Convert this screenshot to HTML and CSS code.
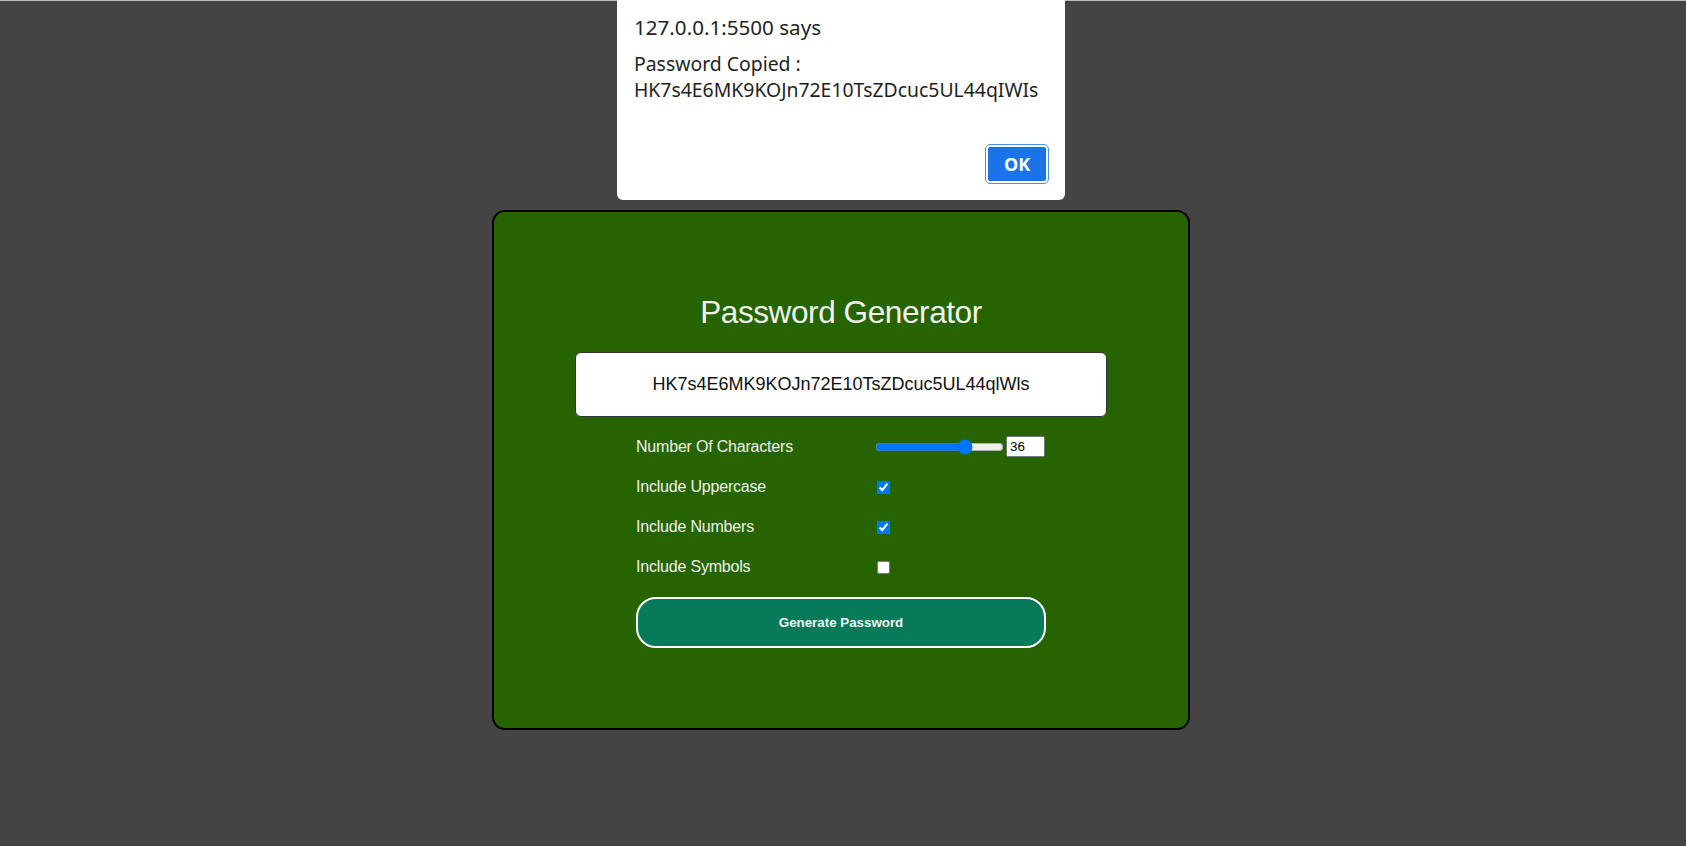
FILE: index.html
```html
<!DOCTYPE html>
<html lang="en">
<head>
<meta charset="utf-8">
<title>Password Generator</title>
<link rel="stylesheet" href="styles.css">
</head>
<body>
  <div class="topline"></div>
  <main class="stage">
    <section class="card">
      <h1 class="title">Password Generator</h1>
      <div class="output">HK7s4E6MK9KOJn72E10TsZDcuc5UL44qlWls</div>
      <div class="options">
        <label class="opt-label row-first">Number Of Characters</label>
        <div class="opt-ctrl row-first">
          <input class="range" type="range" min="4" max="48" value="36">
          <input class="num" type="number" value="36">
        </div>
        <label class="opt-label">Include Uppercase</label>
        <div class="opt-ctrl"><input type="checkbox" checked></div>
        <label class="opt-label">Include Numbers</label>
        <div class="opt-ctrl"><input type="checkbox" checked></div>
        <label class="opt-label">Include Symbols</label>
        <div class="opt-ctrl"><input type="checkbox"></div>
      </div>
      <button class="generate">Generate Password</button>
    </section>
  </main>

  <div class="dialog">
    <div class="dialog-title">127.0.0.1:5500 says</div>
    <div class="dialog-msg">Password Copied :<br>HK7s4E6MK9KOJn72E10TsZDcuc5UL44qIWIs</div>
    <div class="dialog-actions"><button class="ok">OK</button></div>
  </div>
</body>
</html>
```

FILE: styles.css
```css
html, body {
  margin: 0;
  padding: 0;
}

body {
  background: #444444;
  width: 1686px;
  height: 846px;
  overflow: hidden;
  font-family: "Liberation Sans", Arial, sans-serif;
}

.topline {
  height: 1px;
  background: #bdbdbd;
}

.stage {
  display: flex;
  justify-content: center;
  padding-top: 209px;
  padding-right: 4px;
}

.card {
  box-sizing: border-box;
  width: 698px;
  height: 520px;
  background: #266400;
  border: 2px solid #000;
  border-radius: 13px;
  padding-top: 82px;
  display: flex;
  flex-direction: column;
  align-items: center;
}

.title {
  margin: 0;
  font-weight: normal;
  font-size: 31.6px;
  line-height: 36px;
  letter-spacing: -0.45px;
  color: #f2f2f2;
}

.output {
  box-sizing: border-box;
  margin-top: 22px;
  width: 532px;
  height: 65px;
  background: #fff;
  border: 1px solid #333;
  border-radius: 6px;
  display: flex;
  align-items: center;
  justify-content: center;
  font-size: 18px;
  color: #111;
}

.options {
  margin-top: 19px;
  width: 410px;
  display: grid;
  grid-template-columns: 237px 1fr;
  grid-template-rows: 21px 20px 20px 20px;
  row-gap: 20px;
  align-items: center;
}

.opt-label {
  font-size: 16px;
  letter-spacing: -0.2px;
  color: #f0f0f0;
}

.opt-ctrl {
  display: flex;
  align-items: center;
}

.opt-ctrl input[type="checkbox"] {
  margin: 3px 3px 3px 4px;
  width: 13px;
  height: 13px;
}

.range {
  width: 129px;
  margin: 2px;
}

.num {
  width: 31px;
  margin: 0;
  font-family: "Liberation Sans", Arial, sans-serif;
  font-size: 13.333px;
}

.generate {
  box-sizing: border-box;
  margin-top: 20px;
  width: 410px;
  height: 51px;
  background: #077a5a;
  border: 2px solid #fff;
  border-radius: 20px;
  color: #f4f4f4;
  font-family: "Liberation Sans", Arial, sans-serif;
  font-size: 13.333px;
  font-weight: bold;
}

.dialog {
  position: absolute;
  top: 0;
  left: 617px;
  box-sizing: border-box;
  width: 448px;
  height: 200px;
  background: #fff;
  border-radius: 0 0 6px 6px;
  padding: 13px 16px 16px 17px;
  display: flex;
  flex-direction: column;
  font-family: "Noto Sans", "Open Sans", sans-serif;
  color: #1f1f1f;
}

.dialog-title {
  font-size: 20.6px;
  line-height: 28px;
}

.dialog-msg {
  margin-top: 10px;
  font-size: 19.4px;
  line-height: 26px;
}

.dialog-actions {
  margin-top: auto;
  display: flex;
  justify-content: flex-end;
}

.ok {
  box-sizing: border-box;
  width: 62px;
  height: 38px;
  background: #1a73e8;
  border: 2px solid #fff;
  outline: 1px solid #4a8ff0;
  border-radius: 4px;
  color: #fff;
  font-family: "Noto Sans", "Open Sans", sans-serif;
  font-size: 18px;
  font-weight: bold;
  margin: 1px;
}
```
